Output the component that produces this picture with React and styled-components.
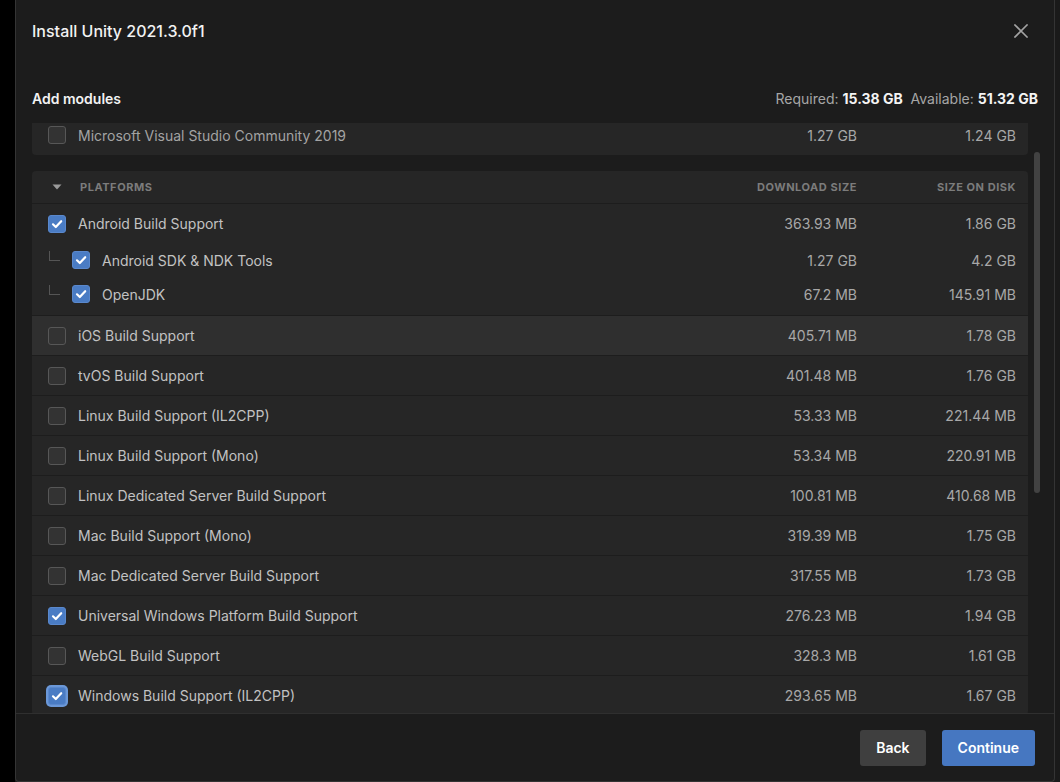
import React, { useLayoutEffect, useRef } from 'react'
import styled, { createGlobalStyle } from 'styled-components'

const GlobalStyle = createGlobalStyle`
  html, body {
    margin: 0;
    padding: 0;
    height: 100%;
    background: linear-gradient(to right, #000 0 15px, #1a1a1a 15px);
    font-family: Inter, "Noto Sans", "Liberation Sans", sans-serif;
    -webkit-font-smoothing: antialiased;
  }
  #root { height: 100%; }
`

const platforms = [
  { name: 'iOS Build Support', dl: '405.71 MB', disk: '1.78 GB', hover: true },
  { name: 'tvOS Build Support', dl: '401.48 MB', disk: '1.76 GB' },
  { name: 'Linux Build Support (IL2CPP)', dl: '53.33 MB', disk: '221.44 MB' },
  { name: 'Linux Build Support (Mono)', dl: '53.34 MB', disk: '220.91 MB' },
  { name: 'Linux Dedicated Server Build Support', dl: '100.81 MB', disk: '410.68 MB' },
  { name: 'Mac Build Support (Mono)', dl: '319.39 MB', disk: '1.75 GB' },
  { name: 'Mac Dedicated Server Build Support', dl: '317.55 MB', disk: '1.73 GB' },
  { name: 'Universal Windows Platform Build Support', dl: '276.23 MB', disk: '1.94 GB', checked: true },
  { name: 'WebGL Build Support', dl: '328.3 MB', disk: '1.61 GB' },
  { name: 'Windows Build Support (IL2CPP)', dl: '293.65 MB', disk: '1.67 GB', checked: true, focus: true },
]

const androidChildren = [
  { name: 'Android SDK & NDK Tools', dl: '1.27 GB', disk: '4.2 GB' },
  { name: 'OpenJDK', dl: '67.2 MB', disk: '145.91 MB' },
]

const Checkbox = ({ checked, focus }) => (
  <Box $checked={checked} $focus={focus}>
    {checked && (
      <svg width="16" height="16" viewBox="0 0 16 16">
        <polyline points="4,8.3 6.8,11 12.2,5.2" fill="none" stroke="#fff" strokeWidth="2.2" strokeLinecap="round" strokeLinejoin="round" />
      </svg>
    )}
  </Box>
)

const App = () => {
  const listRef = useRef(null)
  useLayoutEffect(() => {
    if (listRef.current) listRef.current.scrollTop = 8
  }, [])

  return (
    <>
      <GlobalStyle />
      <Dialog>
        <TitleBar>
          <Title>Install Unity 2021.3.0f1</Title>
          <CloseButton aria-label="Close">
            <svg width="14" height="14" viewBox="0 0 14 14">
              <path d="M1 1 L13 13 M13 1 L1 13" stroke="#a3a3a3" strokeWidth="1.6" strokeLinecap="square" />
            </svg>
          </CloseButton>
        </TitleBar>

        <SubHeader>
          <SubTitle>Add modules</SubTitle>
          <Space>
            Required: <strong>15.38 GB</strong>&nbsp; Available: <strong>51.32 GB</strong>
          </Space>
        </SubHeader>

        <ScrollArea>
          <List ref={listRef}>
            <Card>
              <Row>
                <LabelCell>
                  <Checkbox />
                  <Label $dim>Microsoft Visual Studio Community 2019</Label>
                </LabelCell>
                <Size>1.27 GB</Size>
                <Size>1.24 GB</Size>
              </Row>
            </Card>

            <Card>
              <HeaderRow>
                <LabelCell $gap={14}>
                  <CaretSlot>
                    <svg width="10" height="6" viewBox="0 0 10 6">
                      <path d="M0.5 0.5 H9.5 L5 5.5 Z" fill="#9a9a9a" />
                    </svg>
                  </CaretSlot>
                  <HeadText>Platforms</HeadText>
                </LabelCell>
                <HeadText $right>Download Size</HeadText>
                <HeadText $right>Size on Disk</HeadText>
              </HeaderRow>

              <Group>
                <Row>
                  <LabelCell>
                    <Checkbox checked />
                    <Label>Android Build Support</Label>
                  </LabelCell>
                  <Size>363.93 MB</Size>
                  <Size>1.86 GB</Size>
                </Row>
                {androidChildren.map((c) => (
                  <SubRow key={c.name}>
                    <LabelCell>
                      <TreeLine />
                      <Checkbox checked />
                      <Label>{c.name}</Label>
                    </LabelCell>
                    <Size>{c.dl}</Size>
                    <Size>{c.disk}</Size>
                  </SubRow>
                ))}
              </Group>

              {platforms.map((p) => (
                <Row key={p.name} $hover={p.hover} $bordered>
                  <LabelCell>
                    <Checkbox checked={p.checked} focus={p.focus} />
                    <Label>{p.name}</Label>
                  </LabelCell>
                  <Size>{p.dl}</Size>
                  <Size>{p.disk}</Size>
                </Row>
              ))}
            </Card>
          </List>
          <Track>
            <Thumb />
          </Track>
        </ScrollArea>

        <Footer>
          <Button>Back</Button>
          <Button $primary>Continue</Button>
        </Footer>
      </Dialog>
    </>
  )
}

const Dialog = styled.div`
  box-sizing: border-box;
  margin-left: 15px;
  width: 1040px;
  height: 782px;
  background: #1c1c1c;
  border: 1px solid #343434;
  border-top: none;
  border-radius: 0 0 4px 4px;
  display: flex;
  flex-direction: column;
  overflow: hidden;
`

const TitleBar = styled.div`
  height: 62px;
  flex-shrink: 0;
  display: flex;
  align-items: center;
  justify-content: space-between;
  padding: 0 26px 0 16px;
`

const Title = styled.h1`
  margin: 0;
  font-size: 16px;
  font-weight: 500;
  color: #f2f2f2;
`

const CloseButton = styled.button`
  background: none;
  border: none;
  padding: 0;
  width: 14px;
  height: 14px;
  display: flex;
  cursor: pointer;
`

const SubHeader = styled.div`
  height: 61px;
  flex-shrink: 0;
  display: flex;
  align-items: flex-end;
  justify-content: space-between;
  padding: 0 16px 16px 16px;
  box-sizing: border-box;
  font-size: 14px;
  line-height: 17px;
`

const SubTitle = styled.h2`
  margin: 0;
  font-size: 14px;
  font-weight: 600;
  color: #f2f2f2;
`

const Space = styled.div`
  color: #a6a6a6;
  strong {
    color: #f4f4f4;
    font-weight: 700;
  }
`

const ScrollArea = styled.div`
  flex: 1;
  min-height: 0;
  display: flex;
  padding-left: 16px;
  border-bottom: 1px solid #2f2f2f;
`

const List = styled.div`
  flex: 1;
  overflow: hidden;
  display: flex;
  flex-direction: column;
  gap: 16px;
`

const Track = styled.div`
  width: 26px;
  flex-shrink: 0;
  padding: 29px 0 0 6px;
  box-sizing: border-box;
`

const Thumb = styled.div`
  width: 6px;
  height: 341px;
  border-radius: 3px;
  background: #424242;
`

const Card = styled.div`
  flex-shrink: 0;
  background: #262626;
  border-radius: 4px;
  overflow: hidden;
`

const gridRow = `
  display: grid;
  grid-template-columns: 1fr 150px 159px;
  align-items: center;
  padding: 0 12px 0 16px;
`

const Row = styled.div`
  ${gridRow}
  height: 40px;
  box-sizing: border-box;
  background: ${(p) => (p.$hover ? '#2f2f2f' : 'transparent')};
  border-top: ${(p) => (p.$bordered ? '1px solid #1d1d1d' : 'none')};
`

const HeaderRow = styled.div`
  ${gridRow}
  height: 33px;
  box-sizing: border-box;
  border-bottom: 1px solid #1d1d1d;
`

const Group = styled.div`
  padding-bottom: 4px;
  & > ${Row} {
    height: 39px;
  }
`

const SubRow = styled.div`
  ${gridRow}
  height: 34px;
`

const LabelCell = styled.div`
  display: flex;
  align-items: center;
  gap: ${(p) => p.$gap || 12}px;
  min-width: 0;
`

const CaretSlot = styled.span`
  width: 18px;
  display: flex;
  justify-content: center;
`

const TreeLine = styled.span`
  width: 10px;
  height: 9px;
  margin: -8px 0 0 1px;
  border-left: 1px solid #555;
  border-bottom: 1px solid #555;
  flex-shrink: 0;
`

const Box = styled.span`
  box-sizing: border-box;
  width: 18px;
  height: 18px;
  flex-shrink: 0;
  border-radius: 3px;
  display: flex;
  align-items: center;
  justify-content: center;
  background: ${(p) => (p.$checked ? '#4a7cc4' : '#333333')};
  border: 1px solid ${(p) => (p.$checked ? '#5a88cc' : '#575757')};
  box-shadow: ${(p) => (p.$focus ? '0 0 0 2px #6b98d8' : 'none')};
`

const Label = styled.span`
  font-size: 14px;
  color: ${(p) => (p.$dim ? '#a3a3a3' : '#c2c2c2')};
  white-space: nowrap;
`

const Size = styled.span`
  font-size: 14px;
  color: #a8a8a8;
  text-align: right;
  white-space: nowrap;
`

const HeadText = styled.span`
  font-size: 11px;
  font-weight: 700;
  letter-spacing: 0.55px;
  text-transform: uppercase;
  color: #7c7c7c;
  text-align: ${(p) => (p.$right ? 'right' : 'left')};
`

const Footer = styled.div`
  height: 67px;
  flex-shrink: 0;
  display: flex;
  align-items: center;
  justify-content: flex-end;
  gap: 16px;
  padding: 0 19px 0 0;
`

const Button = styled.button`
  height: 36px;
  padding: 0 16px;
  border: none;
  border-radius: 3px;
  font-family: inherit;
  font-size: 14px;
  font-weight: 600;
  color: #fff;
  background: ${(p) => (p.$primary ? '#4677c1' : '#3f3f3f')};
  cursor: pointer;
`

export default App
